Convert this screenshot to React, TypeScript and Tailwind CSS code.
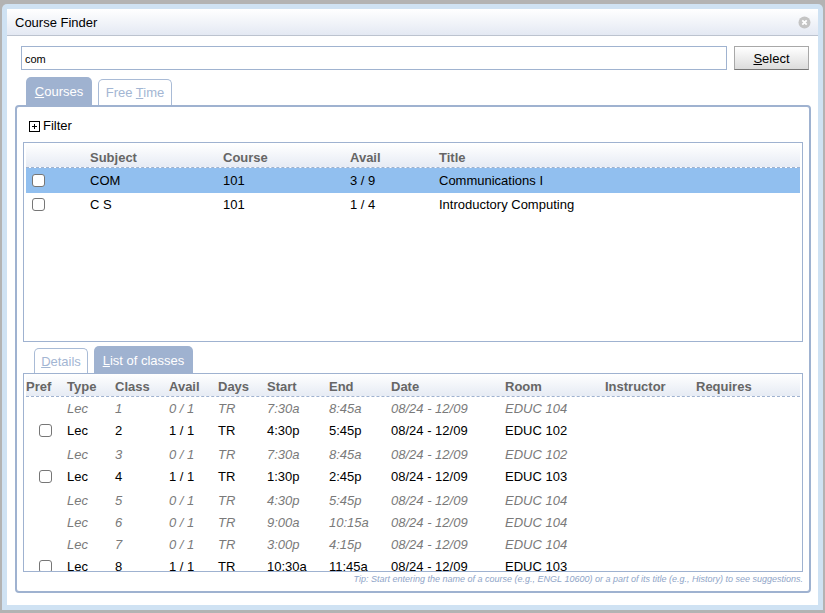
const font = { fontFamily: '"Liberation Sans", Arial, sans-serif' };

const courseRows = [
  { s: "COM", c: "101", a: "3 / 9", t: "Communications I", sel: true, h: "h-[25px]" },
  { s: "C S", c: "101", a: "1 / 4", t: "Introductory Computing", sel: false, h: "h-[23px]" },
];

const classRows: { n: string; av: string; st: string; en: string; room: string; open: boolean; h: string }[] = [
  { n: "1", av: "0 / 1", st: "7:30a", en: "8:45a", room: "EDUC 104", open: false, h: "h-[22px]" },
  { n: "2", av: "1 / 1", st: "4:30p", en: "5:45p", room: "EDUC 102", open: true, h: "h-[24px]" },
  { n: "3", av: "0 / 1", st: "7:30a", en: "8:45a", room: "EDUC 102", open: false, h: "h-[22px]" },
  { n: "4", av: "1 / 1", st: "1:30p", en: "2:45p", room: "EDUC 103", open: true, h: "h-[24px]" },
  { n: "5", av: "0 / 1", st: "4:30p", en: "5:45p", room: "EDUC 104", open: false, h: "h-[22px]" },
  { n: "6", av: "0 / 1", st: "9:00a", en: "10:15a", room: "EDUC 104", open: false, h: "h-[22px]" },
  { n: "7", av: "0 / 1", st: "3:00p", en: "4:15p", room: "EDUC 104", open: false, h: "h-[22px]" },
  { n: "8", av: "1 / 1", st: "10:30a", en: "11:45a", room: "EDUC 103", open: true, h: "h-[24px]" },
];

function Box() {
  return <span className="block w-[13px] h-[13px] rounded-[3px] border border-[#767676] bg-white" />;
}

export default function App() {
  return (
    <div style={font} className="w-[825px] h-[613px] overflow-hidden bg-[#b3b3b3] pt-[4px] pb-[3px] px-[2px] text-[13px] text-black">
      <div className="h-full rounded-t-[5px] bg-[#cfe2f3] px-[5px] pt-[5px] pb-[5px]">
        <div className="h-full flex flex-col bg-white">
          <div className="h-[27px] shrink-0 flex items-center justify-between pl-[8px] pr-[7px] pt-[1px] border-b border-[#bcc3cf] bg-gradient-to-b from-white to-[#e4e9f3]">
            <span className="text-[13px]">Course Finder</span>
            <svg width="13" height="13" viewBox="0 0 13 13">
              <circle cx="6.5" cy="6.5" r="6" fill="#c4c4c4" />
              <path d="M4.3 4.3l4.4 4.4M8.7 4.3l-4.4 4.4" stroke="#fff" strokeWidth="1.8" />
            </svg>
          </div>

          <div className="flex gap-[7px] pl-[14px] mt-[10px] shrink-0">
            <div className="w-[706px] h-[24px] border border-[#a0b3d0] flex items-center pl-[3px] pt-[2px] text-[11px]">com</div>
            <button className="w-[75px] h-[24px] pt-[1px] border border-[#a8a8a8] border-b-[#777] bg-gradient-to-b from-white to-[#dcdcdc] text-[13px]">
              <span className="underline">S</span>elect
            </button>
          </div>

          <div className="flex items-end gap-[6px] pl-[19px] mt-[7px] h-[28px] shrink-0 text-[13px]">
            <div className="w-[66px] h-[28px] pt-[2px] rounded-t-[5px] bg-[#9fb2d0] text-white flex items-center justify-center">
              <span><span className="underline">C</span>ourses</span>
            </div>
            <div className="w-[74px] h-[26px] rounded-t-[5px] border border-b-0 border-[#a9bbd6] text-[#a3b6d3] flex items-center justify-center">
              <span>Free <span className="underline">T</span>ime</span>
            </div>
          </div>

          <div className="ml-[8px] w-[796px] h-[488px] shrink-0 rounded-[4px] border-2 border-[#9fb2d0] px-[6px] flex flex-col">
            <div className="h-[35px] shrink-0 flex items-center gap-[3px] pl-[6px] pt-[3px] text-[13px]">
              <svg width="11" height="11" viewBox="0 0 11 11">
                <rect x="0.5" y="0.5" width="10" height="10" fill="#fff" stroke="#000" />
                <path d="M3 5.5h5M5.5 3v5" stroke="#000" />
              </svg>
              <span>Filter</span>
            </div>

            <div className="h-[200px] shrink-0 border border-[#9fb2d0] px-[2px] pt-[1px] text-[13px]">
              <div className="flex items-center h-[24px] pt-[5px] border-b border-dashed border-[#9fb2d0] bg-gradient-to-b from-white to-[#e6ebf4] font-bold text-[#666] text-[13px]">
                <span className="w-[64px]" />
                <span className="w-[133px]">Subject</span>
                <span className="w-[127px]">Course</span>
                <span className="w-[89px]">Avail</span>
                <span>Title</span>
              </div>
              {courseRows.map((r) => (
                <div key={r.s} className={`flex items-center ${r.h} ${r.sel ? "bg-[#91bfef]" : ""}`}>
                  <span className="w-[64px] pl-[6px]"><Box /></span>
                  <span className="w-[133px]">{r.s}</span>
                  <span className="w-[127px]">{r.c}</span>
                  <span className="w-[89px]">{r.a}</span>
                  <span>{r.t}</span>
                </div>
              ))}
            </div>

            <div className="flex items-end gap-[6px] pl-[11px] h-[31px] shrink-0 text-[13px]">
              <div className="w-[54px] h-[25px] pt-[1px] rounded-t-[5px] border border-b-0 border-[#a9bbd6] text-[#a3b6d3] flex items-center justify-center">
                <span><span className="underline">D</span>etails</span>
              </div>
              <div className="w-[99px] h-[27px] pt-[2px] rounded-t-[5px] bg-[#9fb2d0] text-white flex items-center justify-center">
                <span><span className="underline">L</span>ist of classes</span>
              </div>
            </div>

            <div className="h-[199px] shrink-0 border border-[#9fb2d0] overflow-hidden text-[13px]">
              <div className="flex items-center h-[23px] pt-[3px] mx-[2px] border-b border-dashed border-[#9fb2d0] bg-gradient-to-b from-white to-[#e6ebf4] font-bold text-[#666] text-[13px]">
                <span className="w-[41px]">Pref</span>
                <span className="w-[48px]">Type</span>
                <span className="w-[54px]">Class</span>
                <span className="w-[49px]">Avail</span>
                <span className="w-[49px]">Days</span>
                <span className="w-[62px]">Start</span>
                <span className="w-[62px]">End</span>
                <span className="w-[114px]">Date</span>
                <span className="w-[100px]">Room</span>
                <span className="w-[91px]">Instructor</span>
                <span>Requires</span>
              </div>
              <div>
                {classRows.map((r) => (
                  <div key={r.n} className={`flex items-start leading-[24px] mx-[2px] ${r.h} ${r.open ? "" : "italic text-[#7a7a7a]"}`}>
                    <span className="w-[41px] pl-[13px] pt-[5px]">{r.open && <Box />}</span>
                    <span className="w-[48px]">Lec</span>
                    <span className="w-[54px]">{r.n}</span>
                    <span className="w-[49px]">{r.av}</span>
                    <span className="w-[49px]">TR</span>
                    <span className="w-[62px]">{r.st}</span>
                    <span className="w-[62px]">{r.en}</span>
                    <span className="w-[114px]">08/24 - 12/09</span>
                    <span>{r.room}</span>
                  </div>
                ))}
              </div>
            </div>

            <div className="h-[14px] shrink-0 text-right italic text-[9px] leading-[14px] text-[#8fa5c8]">
              Tip: Start entering the name of a course (e.g., ENGL 10600) or a part of its title (e.g., History) to see suggestions.
            </div>
          </div>
        </div>
      </div>
    </div>
  );
}
